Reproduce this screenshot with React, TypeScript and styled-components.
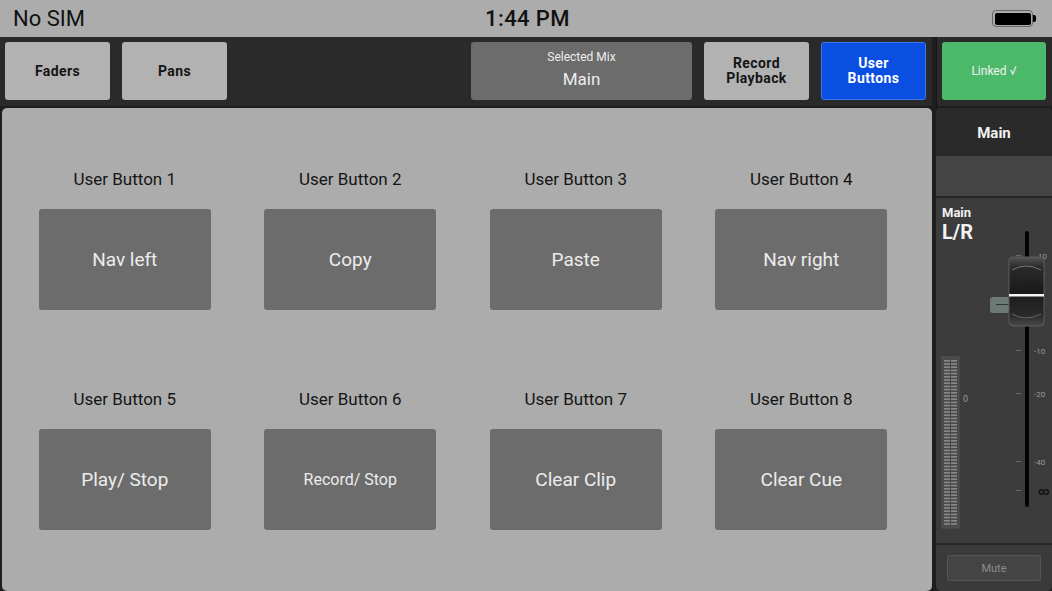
import styled, { createGlobalStyle } from 'styled-components';

const GlobalStyle = createGlobalStyle`
  html, body {
    margin: 0;
    padding: 0;
    background: #1e1e1e;
    font-family: Roboto, 'Liberation Sans', sans-serif;
  }
  * { box-sizing: border-box; }
`;

const Screen = styled.div`
  width: 1052px;
  height: 591px;
  overflow: hidden;
  display: grid;
  grid-template-columns: 932px 1fr;
  grid-template-rows: 37px 71px 1fr;
  column-gap: 4px;
  background: #1e1e1e;
`;

const StatusBar = styled.div`
  grid-column: 1 / span 2;
  display: grid;
  grid-template-columns: 1fr auto 1fr;
  align-items: center;
  padding: 0 16px 0 13px;
  background: #acacac;
  color: #111;
`;

const Carrier = styled.span`
  font-size: 22px;
`;

const Clock = styled.span`
  font-size: 22px;
  font-weight: 500;
  letter-spacing: 0.4px;
  padding-left: 6px;
`;

const Battery = styled.div`
  justify-self: end;
  display: flex;
  align-items: center;
`;

const BatteryBody = styled.div`
  width: 41px;
  height: 17px;
  border: 1.5px solid #666;
  border-radius: 4px;
  padding: 1.5px;

  &::before {
    content: '';
    display: block;
    width: 100%;
    height: 100%;
    background: #000;
    border-radius: 2px;
  }
`;

const BatteryNub = styled.div`
  width: 3px;
  height: 7px;
  background: #000;
  border-radius: 0 2px 2px 0;
`;

const Toolbar = styled.div`
  display: flex;
  gap: 12px;
  padding: 5px 6px 0 5px;
  background: #2a2a2a;
  border-bottom: 2px solid #1e1e1e;
`;

const ToolButton = styled.div<{ $variant?: 'light' | 'blue' | 'green' }>`
  width: 105px;
  height: 58px;
  border-radius: 3px;
  display: flex;
  align-items: center;
  justify-content: center;
  text-align: center;
  font-size: 14px;
  letter-spacing: 0.4px;
  font-weight: 700;
  line-height: 15px;
  background: ${(p) =>
    p.$variant === 'blue' ? '#0a4fe2' : p.$variant === 'green' ? '#4cb86a' : '#b2b2b2'};
  color: ${(p) => (p.$variant === 'blue' ? '#fff' : '#151515')};
  border: 1px solid ${(p) => (p.$variant === 'blue' ? '#3a78f0' : 'transparent')};
`;

const LinkedButton = styled(ToolButton)`
  width: 104px;
  color: #f2f2f2;
  font-size: 12px;
  letter-spacing: 0;
  font-weight: 400;
`;

const MixSelect = styled.div`
  margin-left: auto;
  width: 221px;
  height: 58px;
  border-radius: 3px;
  background: #6c6c6c;
  color: #ececec;
  display: flex;
  flex-direction: column;
  align-items: center;
  justify-content: center;
  gap: 5px;
  padding-bottom: 4px;
`;

const MixLabel = styled.span`
  font-size: 12px;
`;

const MixValue = styled.span`
  font-size: 17px;
`;

const LinkArea = styled.div`
  padding: 5px 0 0 5px;
  background: #2a2a2a;
  border-bottom: 2px solid #1e1e1e;
  border-left: 1px solid #151515;
`;

const MainPanel = styled.div`
  margin-left: 2px;
  background: #acacac;
  border-radius: 5px;
  display: grid;
  grid-template-columns: repeat(4, 225.5px);
  grid-auto-rows: min-content;
  row-gap: 79px;
  padding: 61px 0 0 10px;
`;

const Cell = styled.div`
  display: flex;
  flex-direction: column;
  align-items: center;
  gap: 20px;
`;

const CellLabel = styled.div`
  font-size: 17px;
  line-height: 20px;
  color: #151515;
`;

const UserButton = styled.div<{ $small?: boolean }>`
  width: 172px;
  height: 101px;
  border-radius: 3px;
  background: #6c6c6c;
  color: #ececec;
  display: flex;
  align-items: center;
  justify-content: center;
  font-size: ${(p) => (p.$small ? '16px' : '19px')};
`;

const Strip = styled.div`
  background: #3a3a3a;
  border-radius: 5px;
  display: flex;
  flex-direction: column;
  overflow: hidden;
`;

const StripHeader = styled.div`
  height: 48px;
  padding-top: 2px;
  background: #2a2a2a;
  color: #f2f2f2;
  font-size: 15px;
  font-weight: 700;
  display: flex;
  align-items: center;
  justify-content: center;
`;

const StripSpacer = styled.div`
  height: 42px;
  background: #444;
  border-bottom: 2px solid #262626;
`;

const Channel = styled.div`
  position: relative;
  height: 347px;
  background: #3c3c3c;
  border-bottom: 2px solid #262626;
  padding: 7px 0 0 6px;
  color: #f2f2f2;
`;

const ChannelName = styled.div`
  font-size: 13px;
  font-weight: 700;
  line-height: 16px;
`;

const ChannelBus = styled.div`
  font-size: 20px;
  font-weight: 700;
  line-height: 22px;
`;

const FaderArt = styled.svg`
  position: absolute;
  left: 0;
  top: 0;
`;

const MuteArea = styled.div`
  flex: 1;
  padding: 10px 11px 0 11px;
`;

const MuteButton = styled.div`
  height: 26px;
  border: 1px solid #555;
  border-radius: 3px;
  background: #444;
  color: #8d8d8d;
  font-size: 11px;
  display: flex;
  align-items: center;
  justify-content: center;
`;

const userButtons = [
  { label: 'User Button 1', action: 'Nav left' },
  { label: 'User Button 2', action: 'Copy' },
  { label: 'User Button 3', action: 'Paste' },
  { label: 'User Button 4', action: 'Nav right' },
  { label: 'User Button 5', action: 'Play/ Stop' },
  { label: 'User Button 6', action: 'Record/ Stop', small: true },
  { label: 'User Button 7', action: 'Clear Clip' },
  { label: 'User Button 8', action: 'Clear Cue' },
];

const scale = [
  { label: '10', y: 61, x: 102 },
  { label: '0', y: 80, x: 104 },
  { label: '-10', y: 156, x: 98 },
  { label: '-20', y: 199, x: 98 },
  { label: '-40', y: 267, x: 98 },
];

const Fader = () => {
  const segs = [];
  for (let y = 162; y < 328; y += 3.2) {
    segs.push(<rect key={'a' + y} x={8} y={y} width={6} height={1.6} fill="#8a8a8a" />);
    segs.push(<rect key={'b' + y} x={15} y={y} width={6} height={1.6} fill="#8a8a8a" />);
  }
  return (
    <FaderArt width={116} height={347} viewBox="0 0 116 347">
      <rect x={6} y={159} width={17} height={171} fill="#4a4a4a" stroke="#555" strokeWidth={1} />
      {segs}
      <text x={27} y={204} fontSize={9} fill="#9a9a9a" fontFamily="Roboto, sans-serif">0</text>
      <rect x={89} y={33} width={4} height={276} rx={2} fill="#050505" />
      {scale.map((s) => (
        <g key={s.label}>
          <rect x={80} y={s.y - 4} width={5} height={1} fill="#6a6a6a" />
          <text x={s.x} y={s.y} fontSize={8} fill="#9a9a9a" fontFamily="Roboto, sans-serif">
            {s.label}
          </text>
        </g>
      ))}
      <rect x={80} y={292} width={5} height={1} fill="#6a6a6a" />
      <text x={102} y={297} fontSize={11} fill="#111" fontWeight={700} fontFamily="Roboto, sans-serif">
        ∞
      </text>
      <rect x={54} y={99} width={20} height={16} rx={3} fill="#6b7a72" />
      <rect x={60} y={106} width={14} height={1} fill="#333" />
      <defs>
        <linearGradient id="cap" x1="0" y1="0" x2="0" y2="1">
          <stop offset="0" stopColor="#555" />
          <stop offset="0.15" stopColor="#2a2a2a" />
          <stop offset="0.5" stopColor="#1a1a1a" />
          <stop offset="0.85" stopColor="#2a2a2a" />
          <stop offset="1" stopColor="#4a4a4a" />
        </linearGradient>
      </defs>
      <rect x={73} y={59} width={35} height={69} rx={4} fill="url(#cap)" stroke="#5a5a5a" strokeWidth={1} />
      <path d="M76 72 Q90 64 105 72" stroke="#777" strokeWidth={1} fill="none" />
      <path d="M76 116 Q90 124 105 116" stroke="#666" strokeWidth={1} fill="none" />
      <rect x={73} y={96} width={35} height={2.5} fill="#f4f4f4" />
    </FaderArt>
  );
};

export default function App() {
  return (
    <>
      <GlobalStyle />
      <Screen>
        <StatusBar>
          <Carrier>No SIM</Carrier>
          <Clock>1:44 PM</Clock>
          <Battery>
            <BatteryBody />
            <BatteryNub />
          </Battery>
        </StatusBar>

        <Toolbar>
          <ToolButton>Faders</ToolButton>
          <ToolButton>Pans</ToolButton>
          <MixSelect>
            <MixLabel>Selected Mix</MixLabel>
            <MixValue>Main</MixValue>
          </MixSelect>
          <ToolButton>
            Record
            <br />
            Playback
          </ToolButton>
          <ToolButton $variant="blue">
            User
            <br />
            Buttons
          </ToolButton>
        </Toolbar>

        <LinkArea>
          <LinkedButton $variant="green">Linked √</LinkedButton>
        </LinkArea>

        <MainPanel>
          {userButtons.map((b) => (
            <Cell key={b.label}>
              <CellLabel>{b.label}</CellLabel>
              <UserButton $small={b.small}>{b.action}</UserButton>
            </Cell>
          ))}
        </MainPanel>

        <Strip>
          <StripHeader>Main</StripHeader>
          <StripSpacer />
          <Channel>
            <Fader />
            <ChannelName>Main</ChannelName>
            <ChannelBus>L/R</ChannelBus>
          </Channel>
          <MuteArea>
            <MuteButton>Mute</MuteButton>
          </MuteArea>
        </Strip>
      </Screen>
    </>
  );
}
